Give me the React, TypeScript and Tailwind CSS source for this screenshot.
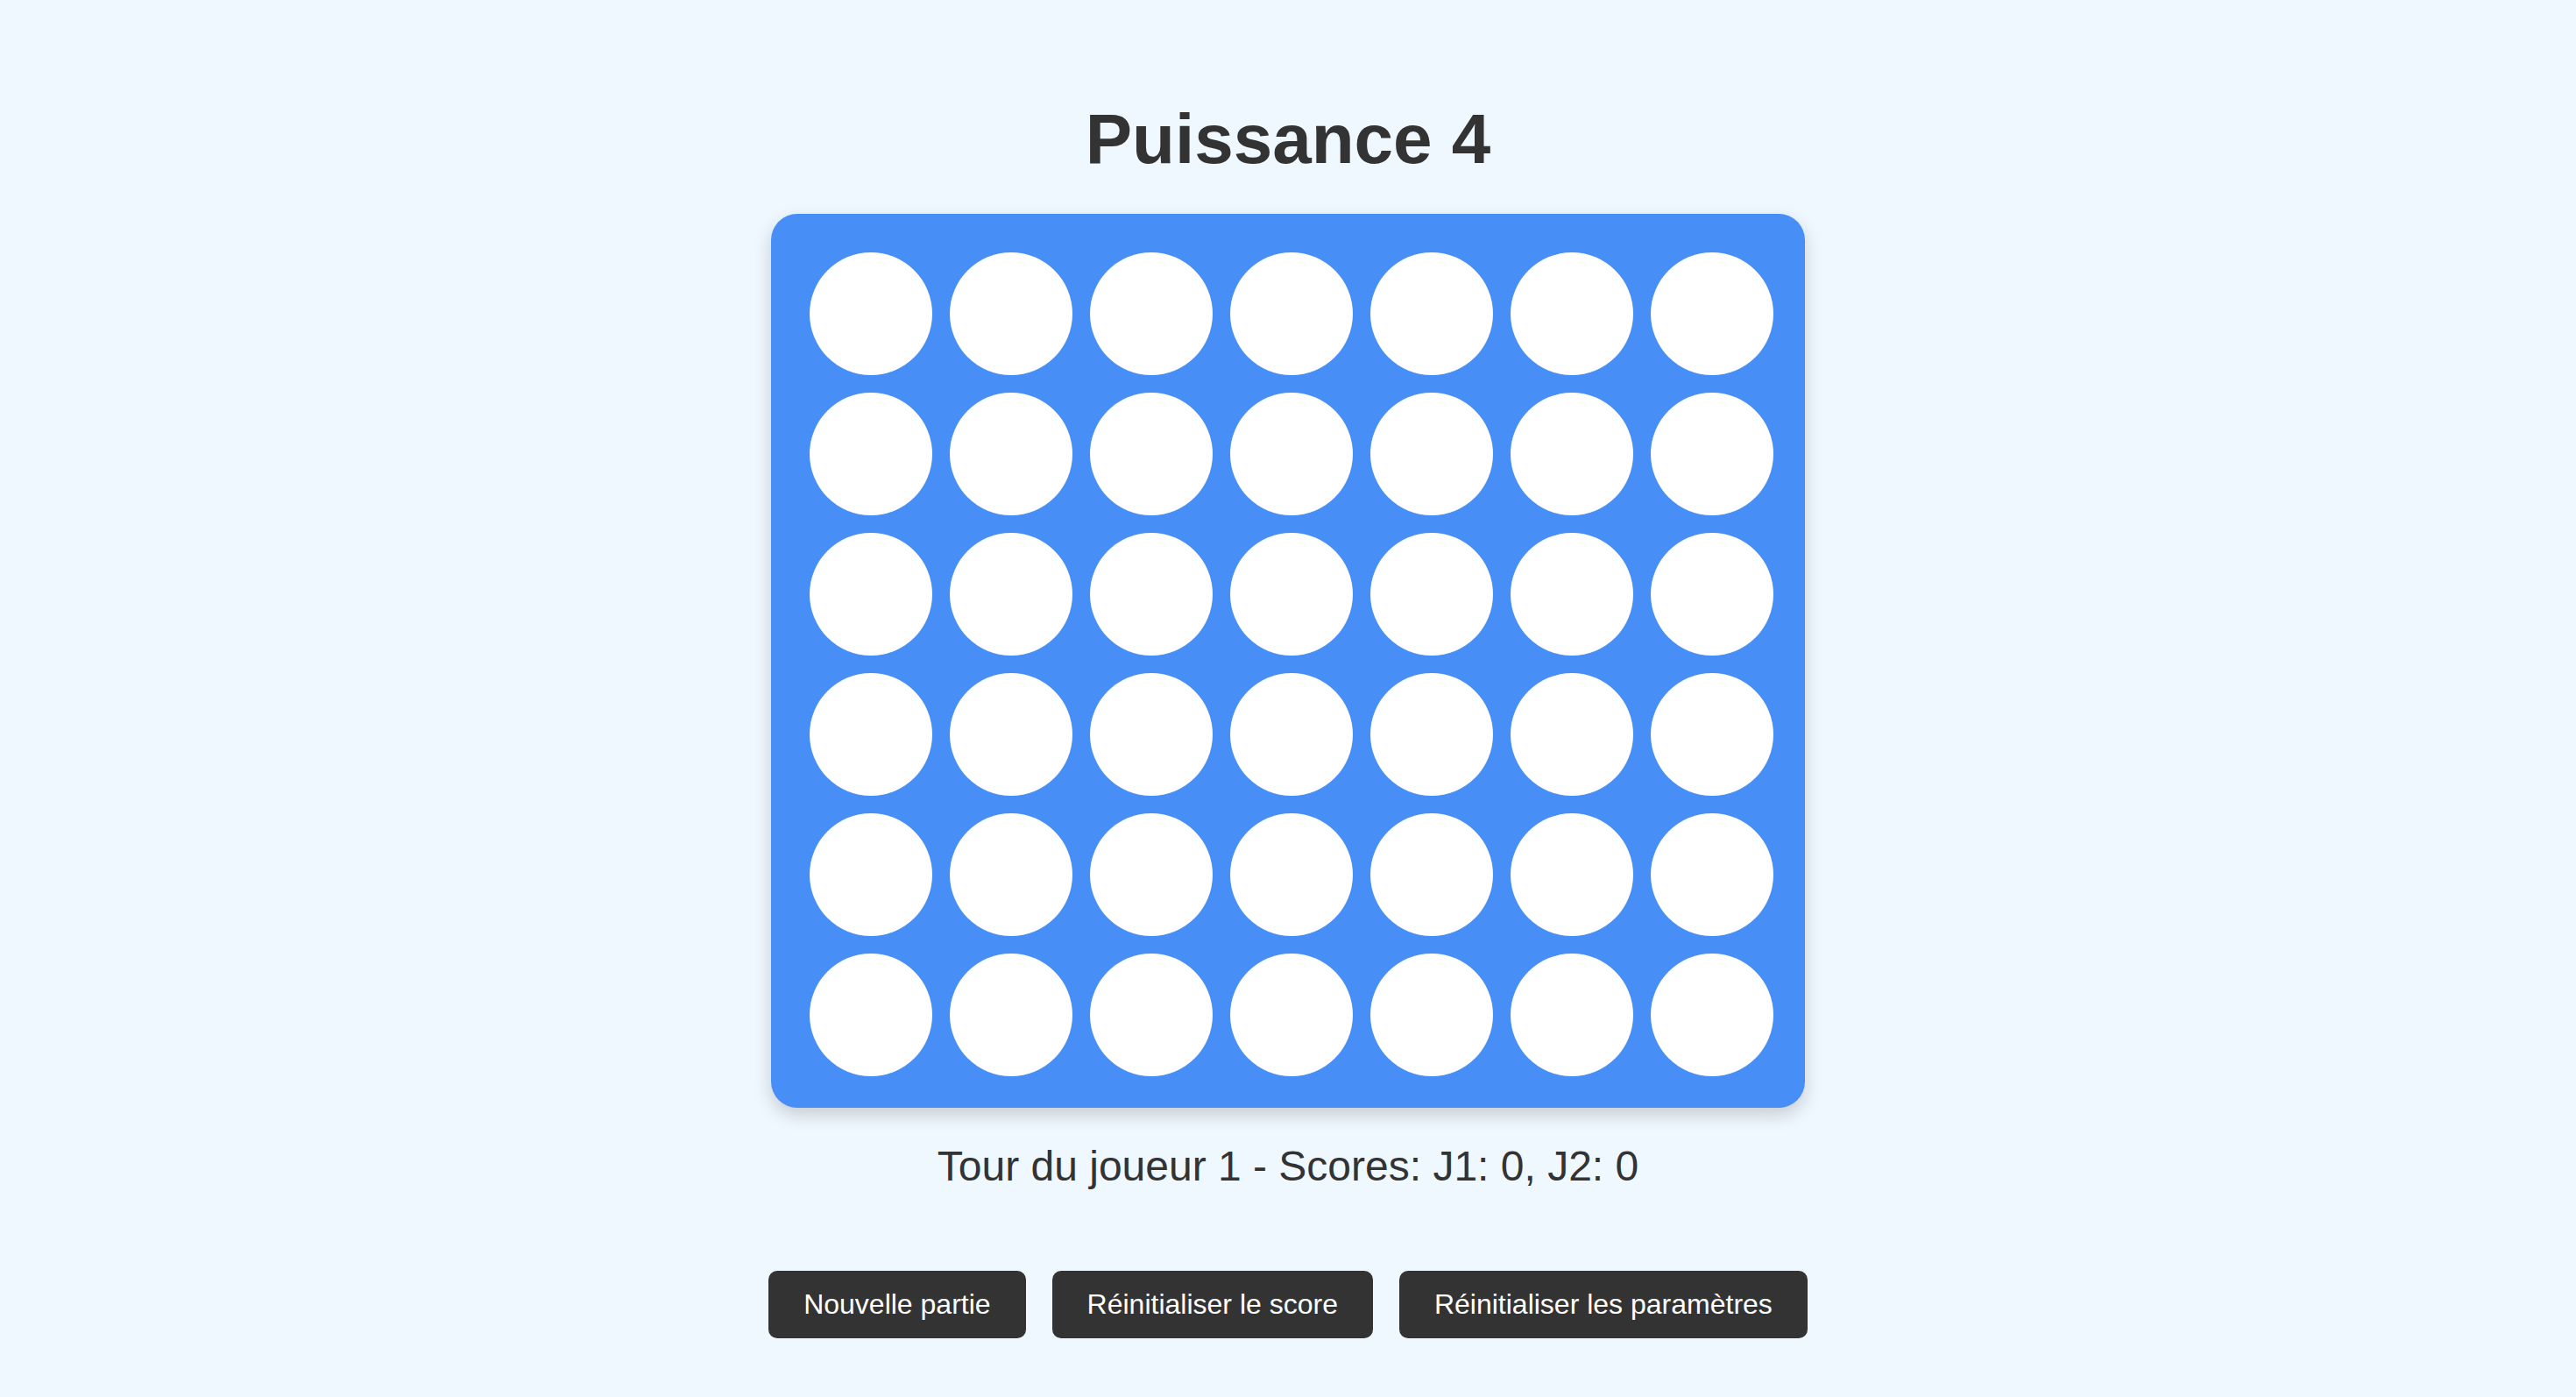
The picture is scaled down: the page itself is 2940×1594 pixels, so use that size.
const ROWS = 6;
const COLS = 7;

export default function App() {
  const cells = Array.from({ length: ROWS * COLS });

  return (
    <div
      className="min-h-screen w-full bg-[#f0f8ff] flex flex-col items-center pt-[113px] text-[#333]"
      style={{ fontFamily: '"Liberation Sans", Arial, sans-serif' }}
    >
      <h1 className="text-[80px] leading-[92px] font-bold">Puissance 4</h1>

      <div className="mt-[39px] w-[1180px] bg-[#478ef7] rounded-[30px] pt-[44px] pl-[44px] pr-[36px] pb-[36px] grid grid-cols-7 gap-[20px] shadow-[0_8px_20px_rgba(0,0,0,0.18)]">
        {cells.map((_, i) => (
          <div key={i} className="size-[140px] rounded-full bg-white cursor-pointer"></div>
        ))}
      </div>

      <p className="mt-[39px] text-[48px] leading-[56px]">
        Tour du joueur 1 - Scores: J1: 0, J2: 0
      </p>

      <div className="mt-[91px] flex gap-[30px]">
        <button className="bg-[#333] text-white text-[32px] leading-[37px] px-[40px] py-[20px] rounded-[10px]">
          Nouvelle partie
        </button>
        <button className="bg-[#333] text-white text-[32px] leading-[37px] px-[40px] py-[20px] rounded-[10px]">
          Réinitialiser le score
        </button>
        <button className="bg-[#333] text-white text-[32px] leading-[37px] px-[40px] py-[20px] rounded-[10px]">
          Réinitialiser les paramètres
        </button>
      </div>
    </div>
  );
}
